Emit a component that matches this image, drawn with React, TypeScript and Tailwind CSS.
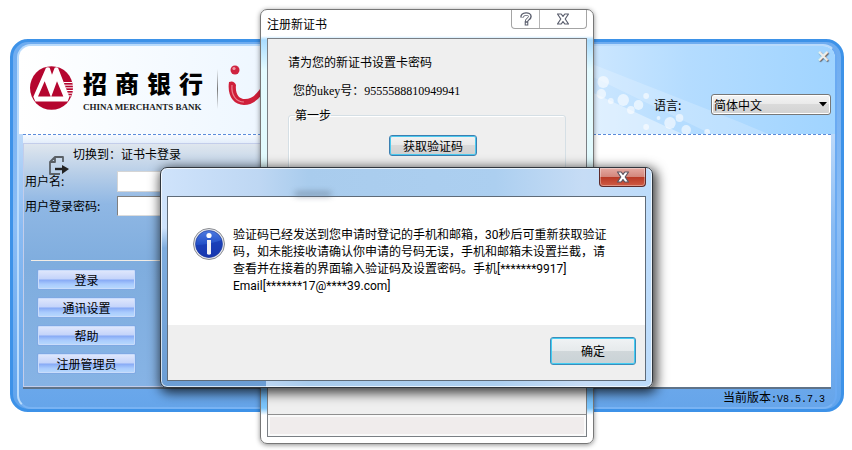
import type { ReactNode } from 'react';

const logoChars = ['招', '商', '银', '行'];
const menuItems = ['登录', '通讯设置', '帮助', '注册管理员'];

function BankLogo() {
  return (
    <div className="flex items-start">
      <svg viewBox="0 0 129 131" className="w-[43px] h-11 mt-px" aria-hidden="true">
        <ellipse cx="64.5" cy="65.5" rx="64.5" ry="65.5" fill="#b5062f" />
        <path d="M10 92 L48 5 Q54 2 59 5 L66 26 L74 5 Q79 2 84 5 L118 92 L113 106 L16 106 Z" fill="#fff" />
        <path d="M24 91 L44 45 L62 91 Z M64 91 L81 45 L100 91 Z" fill="#b5062f" />
        <path d="M101 49H127M104 57H129M107 65H129M110 73H129M113 81H127M116 89H124" stroke="#fff" strokeWidth="3" />
      </svg>
      <div className="ml-2.5 w-30 font-['Noto_Sans_CJK_SC',sans-serif]">
        <div className="flex justify-between text-2xl leading-9 font-black text-black">
          {logoChars.map((char) => (
            <span key={char}>{char}</span>
          ))}
        </div>
        <div className="whitespace-nowrap font-['Liberation_Serif',serif] text-[9px] leading-3 font-bold text-[#222]">
          CHINA MERCHANTS BANK
        </div>
      </div>
      <div className="ml-3.5 mt-1 h-10 w-px bg-gradient-to-b from-transparent via-[#777] to-transparent" />
      <svg viewBox="0 0 44 42" className="ml-2.5 w-11 h-[42px]" aria-hidden="true">
        <circle cx="7" cy="5" r="4.5" fill="#cf2440" />
        <circle cx="6" cy="3.5" r="1.6" fill="#ef9aa6" />
        <path
          d="M1 17 Q6 15 8 20 C7 29 11 34 17 34 C25 34 31 27 36 17 L40 19 C34 32 26 40 16 40 C5 40 -1 30 1 17 Z"
          fill="#cf1f3a"
        />
        <path d="M4 20 C3 30 8 37 16 37" stroke="#ec8190" strokeWidth="1.2" fill="none" />
      </svg>
    </div>
  );
}

function HeaderSparkles() {
  return (
    <svg
      viewBox="0 0 260 88"
      preserveAspectRatio="none"
      className="absolute top-0 right-0 h-full w-[248px]"
      aria-hidden="true"
    >
      <path d="M0 16 L160 76 L190 88 L130 88 L0 28 Z" fill="#fff" opacity="0.2" />
      <path d="M0 44 L100 88 L0 88 Z" fill="#fff" opacity="0.4" />
      <g fill="#fff" opacity="0.6">
        <circle cx="17" cy="36" r="6" />
        <circle cx="15" cy="48" r="5" />
        <circle cx="25" cy="55" r="3" />
        <circle cx="38" cy="54" r="6" />
        <circle cx="46" cy="64" r="4" />
        <circle cx="54" cy="59" r="5" />
        <circle cx="62" cy="50" r="3" />
        <circle cx="62" cy="81" r="3" />
        <circle cx="75" cy="72" r="2" />
        <circle cx="87" cy="77" r="6" />
        <circle cx="97" cy="72" r="4" />
        <circle cx="104" cy="84" r="5" />
        <circle cx="126" cy="86" r="3" />
      </g>
    </svg>
  );
}

function SwitchIcon() {
  return (
    <svg viewBox="0 0 20 20" className="w-5 h-5" fill="none" aria-hidden="true">
      <path
        d="M14 6 V1 H6 L1 6 V18 H11 M6 1 V6 H1"
        stroke="#5a6066"
        strokeWidth="1.8"
        strokeLinejoin="round"
      />
      <path d="M6 13 H14" stroke="#222" strokeWidth="2.4" />
      <path d="M13 9 L20 13 L13 18 Z" fill="#222" />
    </svg>
  );
}

function InfoIcon() {
  return (
    <svg viewBox="0 0 34 34" className="w-[34px] h-[34px] shrink-0" aria-hidden="true">
      <defs>
        <linearGradient id="info" x1="0" y1="0" x2="0" y2="1">
          <stop offset="0" stopColor="#4d7be0" />
          <stop offset="0.5" stopColor="#2350c8" />
          <stop offset="1" stopColor="#1e3db4" />
        </linearGradient>
      </defs>
      <circle cx="17" cy="17" r="15.5" fill="#e6e8ee" stroke="#8b8d92" />
      <circle cx="17" cy="17" r="13.5" fill="url(#info)" stroke="#25409c" strokeWidth="0.7" />
      <path d="M4 18 Q16 18 30 13 Q31 29 17 30.5 Q4 29 4 18 Z" fill="#1433ac" opacity="0.6" />
      <circle cx="17" cy="8.5" r="2.6" fill="#fff" />
      <path d="M15 13 H19 V27 Q17 28.5 15 27 Z" fill="#f1f1f4" />
    </svg>
  );
}

function CrossIcon({ fill, stroke }: { fill: string; stroke: string }) {
  return (
    <svg viewBox="0 0 14 12" className="w-3.5 h-3" aria-hidden="true">
      <path
        d="M1.5 1 H5.2 L7 3.4 L8.8 1 H12.5 L9.2 6 L12.5 11 H8.8 L7 8.6 L5.2 11 H1.5 L4.8 6 Z"
        fill={fill}
        stroke={stroke}
        strokeWidth="1.2"
        strokeLinejoin="round"
      />
    </svg>
  );
}

function GroupBox({ title, children }: { title: string; children?: ReactNode }) {
  return (
    <fieldset className="h-[79px] rounded-[3px] border border-[#d5dfe5] px-1.5 shadow-[inset_1px_1px_0_#fff]">
      <legend className="leading-4">{title}</legend>
      {children}
    </fieldset>
  );
}

function LoginWindow() {
  return (
    <main className="ml-2.5 mr-2 rounded-[18px] border-[3px] border-[#3d92e8] bg-gradient-to-b from-[#6eacf0] via-[#8bbdf5] to-[#5fa3ec] px-1">
      <div className="mt-0.5 rounded-[14px] border-2 border-[#b9dbfc] border-r-[#6aaaf2] border-b-[#79b3f3] bg-gradient-to-b from-[#edf5fe] via-[#8abbf2] to-[#66a5ea]">
        <header className="relative flex h-[88px] justify-between rounded-t-xl bg-[linear-gradient(90deg,#ffffff_0%,#eff7ff_28%,#dceeff_62%,#b4dcff_82%,#a0d4ff_100%)]">
          <HeaderSparkles />
          <div className="pt-[19px] pl-[11px]">
            <BankLogo />
          </div>
          <div className="relative flex flex-col items-end pr-1">
            <button
              type="button"
              aria-label="关闭"
              className="h-5 w-4 text-center font-['Liberation_Sans',sans-serif] text-xl leading-3 font-bold text-[#e9ecef] [text-shadow:1px_1px_1px_#56606a]"
            >
              ×
            </button>
            <div className="mt-7 flex items-center">
              <label htmlFor="language" className="w-[57px]">
                语言:
              </label>
              <select
                id="language"
                className="h-[21px] w-30 appearance-none rounded-[3px] border border-[#777] bg-[#e4e4e4] bg-[linear-gradient(#f4f4f4,#e9e9e9_50%,#dadada_50%,#d2d2d2)] pl-0.5 shadow-[inset_0_0_0_1px_#fff]"
              >
                <option>简体中文</option>
              </select>
              <svg viewBox="0 0 8 5" className="pointer-events-none -ml-3 mr-1 h-[5px] w-2" aria-hidden="true">
                <path d="M0 0H8L4 4.5Z" fill="#000" />
              </svg>
            </div>
          </div>
        </header>

        <div className="mr-1 ml-1 border-t border-dashed border-[#5b8cdb] bg-white">
          <div className="flex">
            <div className="w-[300px] bg-[linear-gradient(#f6faff,#e3edfa_8px)] pt-2">
              <aside className="h-[244px] border border-r-0 border-[#c3cdea] bg-[linear-gradient(180deg,#dfe6ee_0px,#b9cfe8_28px,#8fb7e4_60px,#7fadde_120px,#86b3e5_100%)] px-px">
                <div className="flex items-start pl-6">
                  <button type="button" aria-label="切换" className="mt-3 h-5">
                    <SwitchIcon />
                  </button>
                  <a href="#card" className="ml-1 mt-0.5 leading-4">
                    切换到：证书卡登录
                  </a>
                </div>
                <div className="-mt-[5px] grid grid-cols-[92px_180px] gap-y-1">
                  <label htmlFor="user" className="leading-5">
                    用户名:
                  </label>
                  <input id="user" className="h-[21px] border border-[#d5d5d5] bg-white px-1" />
                  <label htmlFor="password" className="leading-5">
                    用户登录密码:
                  </label>
                  <input
                    id="password"
                    type="password"
                    className="h-5 border border-[#dcdcdc] border-t-[#7f7f7f] border-l-[#7f7f7f] bg-white px-1"
                  />
                </div>
                <hr className="mt-11 ml-1.5 border-[#f3ede5]" />
                <nav className="mt-2 ml-3 flex w-[99px] flex-col gap-[7px]">
                  {menuItems.map((item) => (
                    <button
                      key={item}
                      type="button"
                      className="h-[21px] rounded-[2px] border border-[#7fa9e3] bg-[linear-gradient(#e1e8fc,#c3d3fa_48%,#86a9f5_52%,#a9cbfd_75%,#b9dafd)] leading-5 shadow-[inset_0_0_0_1px_#c9dcfb]"
                    >
                      {item}
                    </button>
                  ))}
                </nav>
              </aside>
            </div>
            <div className="flex-1 bg-white" />
          </div>
        </div>
        <footer className="mx-1 h-5 rounded-b-xl border-t-2 border-[#5f7389] pr-1.5 text-right leading-4">
          当前版本
          <span className="font-['Liberation_Mono',monospace] text-[10px]">:V8.5.7.3</span>
        </footer>
      </div>
    </main>
  );
}

function RegisterWindow() {
  return (
    <section className="absolute top-[9px] left-[260px] w-[334px] rounded-[7px] border border-[#777] bg-[linear-gradient(#fff_26px,#a9dcff_30px,#e4fbff_60px,#dcf7f8_370px,#6fb9f8_380px,#7cc6fb_398px,#fff_405px)] px-1.5 pb-1.5 shadow-[0_1px_5px_rgba(0,0,0,0.45)]">
      <header className="flex h-7 items-start justify-between">
        <h2 className="mt-1.5 leading-4">注册新证书</h2>
        <div className="flex h-[19px] w-[76px] overflow-hidden rounded-b-[4px] border border-t-0 border-[#a4a4a4] bg-white">
          <button type="button" aria-label="帮助" className="flex w-7 items-center justify-center border-r border-[#b5b5b5]">
            <svg viewBox="0 0 12 14" className="h-3.5 w-3" aria-hidden="true">
              <path
                d="M2 5.5 C2 1 10 1 10 4.5 C10 7 6.5 6.8 6.5 9.6 M6.5 9.6 V13.4"
                stroke="#5b5f6e"
                strokeWidth="3.6"
                fill="none"
              />
              <path
                d="M2.2 4.8 C3 1.4 9.8 1.4 9.6 4.5 C9.4 7 6.5 6.6 6.5 9.2 M6.5 10.8 V12.6"
                stroke="#fff"
                strokeWidth="1.5"
                fill="none"
              />
            </svg>
          </button>
          <button type="button" aria-label="关闭" className="flex flex-1 items-center justify-center">
            <CrossIcon fill="#fff" stroke="#5b5f6e" />
          </button>
        </div>
      </header>
      <div className="border border-[#7a7f84] bg-[#efefef]">
        <div className="h-[375px] px-5 pt-[15px]">
          <p className="leading-4">请为您的新证书设置卡密码</p>
          <p className="mt-3 pl-[5px] leading-4">
            您的<span className="font-['Liberation_Serif',serif]">ukey</span>号：
            <span className="font-['Liberation_Serif',serif]">9555588810949941</span>
          </p>
          <div className="mt-2">
            <GroupBox title="第一步">
              <button
                type="button"
                className="mt-3 mr-[82px] ml-auto block h-[21px] w-[88px] rounded-[3px] border border-[#3c7fb1] bg-[linear-gradient(#f3f3f3,#e8e8e8_50%,#d9d9d9_50%,#cfcfcf)] leading-4 shadow-[inset_0_0_0_1px_#4cc9ee]"
              >
                获取验证码
              </button>
            </GroupBox>
            <GroupBox title="第二步" />
          </div>
        </div>
        <div className="h-[22px] border-t border-[#8f8f8f] bg-[#f0ecec] shadow-[inset_0_0_0_2px_#fafafa]" />
      </div>
    </section>
  );
}

function MessageDialog() {
  return (
    <div
      role="dialog"
      aria-label="验证码"
      className="absolute top-[167px] left-[160px] w-[493px] rounded-[7px] border border-[#30363d] bg-[linear-gradient(#8ab6e600_60px,#7fadde_80px,#6b9dd4),linear-gradient(90deg,#cfe3fb_0%,#bed7f3_20%,#a9cced_30%,#accff0_68%,#c6dcf5_86%,#bddcfb_100%)] bg-[size:105px_100%,100%_100%] bg-no-repeat px-1.5 pb-1.5 shadow-[inset_0_0_0_1px_rgba(255,255,255,0.7),2px_3px_12px_2px_rgba(0,0,0,0.75)]"
    >
      <header className="flex h-7 items-start justify-between">
        <div className="mt-6 ml-32 h-1 w-9 bg-[#56677a] opacity-60 blur-[3px]" />
        <button
          type="button"
          aria-label="关闭"
          className="flex h-[19px] w-[47px] items-center justify-center rounded-b-[4px] border border-t-0 border-[#5e2a2a] bg-[linear-gradient(#e5aaa2,#d3877c_48%,#b93a26_52%,#cf5b45)] shadow-[inset_0_0_0_1px_rgba(255,255,255,0.35)]"
        >
          <CrossIcon fill="#fff" stroke="#5d5560" />
        </button>
      </header>
      <div className="border border-[#5f6b78]">
        <div className="flex h-32 bg-white pt-[30px] pl-6">
          <InfoIcon />
          <p className="ml-[7px] w-[378px] font-[Roboto,'Noto_Sans_CJK_SC',sans-serif] leading-[17px]">
            验证码已经发送到您申请时登记的手机和邮箱，30秒后可重新获取验证
            <br />
            码，如未能接收请确认你申请的号码无误，手机和邮箱未设置拦截，请
            <br />
            查看并在接着的界面输入验证码及设置密码。手机[*******9917]
            <br />
            Email[*******17@****39.com]
          </p>
        </div>
        <div className="flex h-[55px] justify-end bg-[#efefef] pt-3 pr-[9px]">
          <button
            type="button"
            className="h-7 w-[86px] rounded-[3px] border border-[#3c8dba] bg-[linear-gradient(#f0f3f5,#e6eaec_48%,#d0d7da_50%,#c9d2d6)] shadow-[inset_0_0_0_1px_#43cdf3]"
          >
            确定
          </button>
        </div>
      </div>
    </div>
  );
}

export default function App() {
  return (
    <div className="relative min-h-screen bg-white pt-[39px] font-['Noto_Sans_CJK_SC',sans-serif] text-xs text-black">
      <LoginWindow />
      <RegisterWindow />
      <MessageDialog />
    </div>
  );
}
